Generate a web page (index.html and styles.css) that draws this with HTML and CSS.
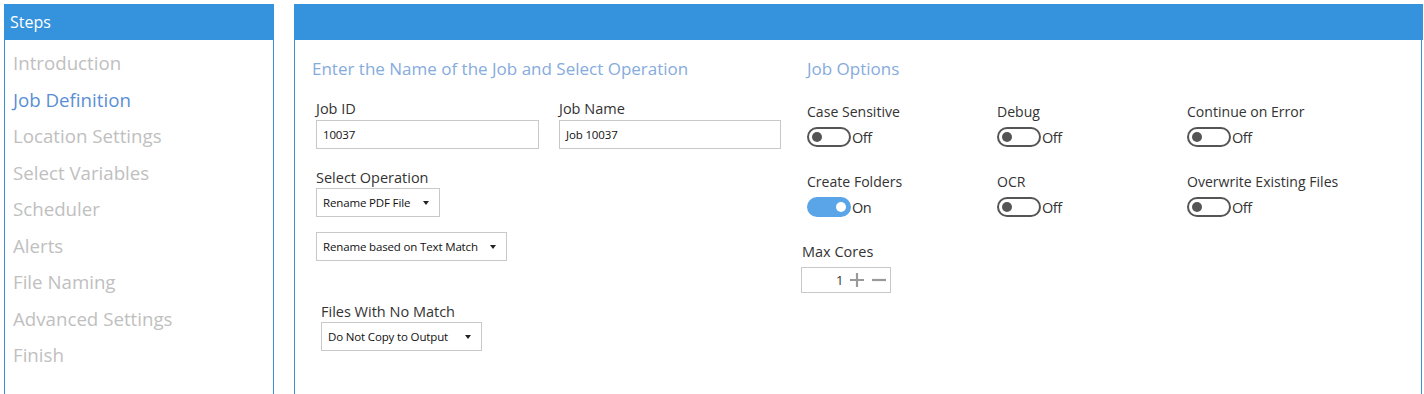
FILE: index.html
```html
<!DOCTYPE html>
<html lang="en">
<head>
    <meta charset="UTF-8">
    <title>Job Definition</title>
    <link rel="stylesheet" href="styles.css">
</head>
<body>
<div class="wrap">
    <div class="steps">
        <div class="steps-head">Steps</div>
        <ul class="steps-list">
            <li>Introduction</li>
            <li class="on">Job Definition</li>
            <li>Location Settings</li>
            <li>Select Variables</li>
            <li>Scheduler</li>
            <li>Alerts</li>
            <li>File Naming</li>
            <li>Advanced Settings</li>
            <li>Finish</li>
        </ul>
    </div>
    <div class="main">
        <div class="main-head"></div>
        <div class="main-body">
            <div class="col-left">
                <h2 class="title">Enter the Name of the Job and Select Operation</h2>
                <div class="row">
                    <div class="field f-id">
                        <label>Job ID</label>
                        <div class="input">10037</div>
                    </div>
                    <div class="field f-name">
                        <label>Job Name</label>
                        <div class="input">Job 10037</div>
                    </div>
                </div>
                <div class="field f-op">
                    <label>Select Operation</label>
                    <div class="select s-op">Rename PDF File<span class="arrow"></span></div>
                </div>
                <div class="select s-match">Rename based on Text Match<span class="arrow"></span></div>
                <div class="field f-nomatch">
                    <label>Files With No Match</label>
                    <div class="select s-nomatch">Do Not Copy to Output<span class="arrow"></span></div>
                </div>
            </div>
            <div class="col-right">
                <h2 class="title">Job Options</h2>
                <div class="options">
                    <div class="opt">
                        <label>Case Sensitive</label>
                        <div class="toggle"><span class="sw"></span>Off</div>
                    </div>
                    <div class="opt">
                        <label>Debug</label>
                        <div class="toggle"><span class="sw"></span>Off</div>
                    </div>
                    <div class="opt">
                        <label>Continue on Error</label>
                        <div class="toggle"><span class="sw"></span>Off</div>
                    </div>
                    <div class="opt">
                        <label>Create Folders</label>
                        <div class="toggle"><span class="sw sw-on"></span>On</div>
                    </div>
                    <div class="opt">
                        <label>OCR</label>
                        <div class="toggle"><span class="sw"></span>Off</div>
                    </div>
                    <div class="opt">
                        <label>Overwrite Existing Files</label>
                        <div class="toggle"><span class="sw"></span>Off</div>
                    </div>
                </div>
                <div class="cores">
                    <label>Max Cores</label>
                    <div class="spin">
                        <span class="num">1</span>
                        <svg width="16" height="16" viewBox="0 0 16 16"><path d="M1 8h14M8 1v14" stroke="#999" stroke-width="2.2"/></svg>
                        <svg width="16" height="16" viewBox="0 0 16 16"><path d="M1 8h14" stroke="#999" stroke-width="2.2"/></svg>
                    </div>
                </div>
            </div>
        </div>
    </div>
</div>
</body>
</html>
```

FILE: styles.css
```css
*{ margin: 0; padding: 0; box-sizing: border-box; }
ul{ list-style: none; }
body{
    background: #fff;
    font-family: "Open Sans", "Noto Sans", sans-serif;
    color: #333;
    overflow: hidden;
}
.wrap{
    display: flex;
    gap: 20px;
    padding: 4px 2px 0 4px;
    height: 394px;
}
.steps{
    width: 270px;
    border: 1px solid #3b8fd6;
    border-top: none;
    border-bottom: none;
}
.steps-head{
    height: 36px;
    margin: 0 -1px;
    padding-left: 6px;
    background: #3592dc;
    color: #fff;
    font-size: 16px;
    line-height: 36px;
}
.steps-list{
    padding: 5px 0 0 8px;
}
.steps-list li{
    height: 36.5px;
    line-height: 36.5px;
    font-size: 18.7px;
    color: #c0c0c0;
}
.steps-list li.on{
    color: #5a8fd5;
}
.main{
    flex: 1;
    border: 1px solid #3b8fd6;
    border-top: none;
    border-bottom: none;
}
.main-head{
    height: 36px;
    margin: 0 -2px 0 -1px;
    background: #3592dc;
}
.main-body{
    display: flex;
    padding: 17px 0 0 17px;
}
.title{
    font-size: 17px;
    font-weight: normal;
    line-height: 24px;
    color: #86abdd;
}
.col-left{
    width: 495px;
}
.col-right{
    flex: 1;
}
label{
    display: block;
    font-size: 14.5px;
    line-height: 20px;
    color: #333;
}
.row{
    display: flex;
    gap: 20px;
    margin-top: 18px;
    padding-left: 4px;
}
.field label{
    margin-bottom: 1px;
}
.f-id{ width: 223px; }
.f-name{ width: 222px; }
.input, .select{
    height: 29px;
    border: 1px solid #c9c9c9;
    font-size: 11.5px;
    letter-spacing: -.15px;
    line-height: 27px;
    color: #111;
    padding-left: 6px;
    white-space: nowrap;
}
.f-op{
    margin-top: 19px;
    padding-left: 4px;
}
.f-op label{ margin-bottom: 0; }
.select{
    display: flex;
    align-items: center;
    padding-right: 10px;
}
.arrow{
    width: 0;
    height: 0;
    margin-left: auto;
    border-left: 3.5px solid transparent;
    border-right: 3.5px solid transparent;
    border-top: 4px solid #222;
}
.s-op{ width: 124px; }
.s-match{
    width: 191px;
    margin: 15px 0 0 4px;
}
.f-nomatch{
    margin-top: 41px;
    padding-left: 9px;
}
.f-nomatch label{ margin-bottom: 0; }
.s-nomatch{ width: 161px; }
.options{
    display: grid;
    grid-template-columns: 190px 190px 190px;
    row-gap: 25px;
    margin-top: 21px;
}
.opt label{
    transform: scaleX(.97);
    transform-origin: left;
    white-space: nowrap;
}
.toggle{
    display: flex;
    align-items: center;
    margin-top: 5px;
    height: 20px;
    font-size: 14.5px;
    letter-spacing: -.5px;
    color: #333;
}
.sw{
    position: relative;
    width: 44px;
    height: 20px;
    margin-right: 1px;
    border: 2px solid #555;
    border-radius: 10px;
}
.sw:after{
    content: "";
    position: absolute;
    left: 3px;
    top: 3px;
    width: 10px;
    height: 10px;
    border-radius: 50%;
    background: #555;
}
.sw-on{
    border-color: #5aa5e8;
    background: #5aa5e8;
}
.sw-on:after{
    left: auto;
    right: 3px;
    background: #fff;
}
.cores{
    margin: 25px 0 0 -6px;
}
.cores label{
    margin-bottom: 5px;
    padding-left: 1px;
}
.spin{
    display: flex;
    align-items: center;
    gap: 6px;
    width: 90px;
    height: 26px;
    border: 1px solid #c9c9c9;
    padding-left: 34px;
}
.num{
    font-size: 13px;
    color: #333;
}
```
